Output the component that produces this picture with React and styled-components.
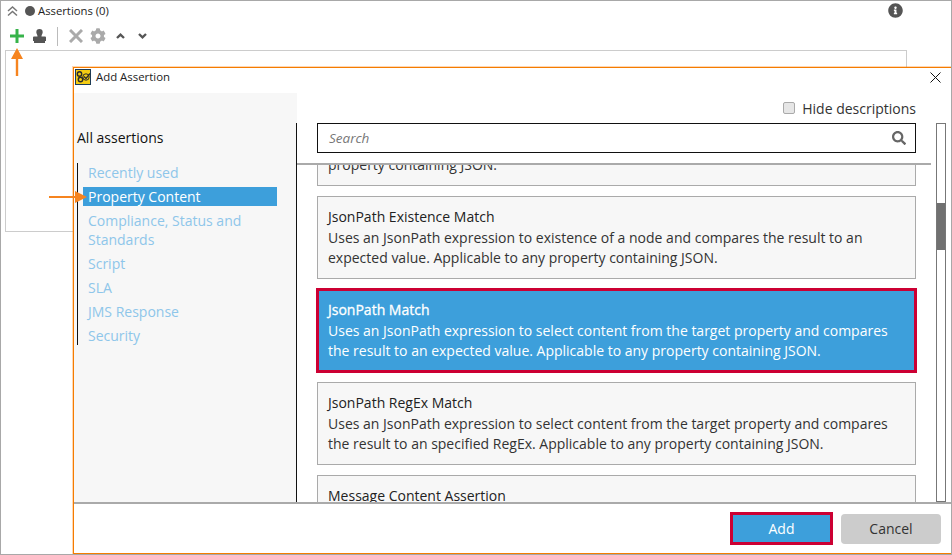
import React from 'react';
import styled, { createGlobalStyle } from 'styled-components';
import { FaInfoCircle, FaCog, FaSearch } from 'react-icons/fa';

const GlobalStyle = createGlobalStyle`
  html, body {
    margin: 0;
    padding: 0;
    background: #fff;
  }
  * {
    box-sizing: border-box;
  }
`;

const Page = styled.div`
  position: relative;
  width: 952px;
  height: 555px;
  overflow: hidden;
  background: #fff;
  border: 1px solid #a8a8a8;
  font-family: 'Open Sans', 'Noto Sans', sans-serif;
  font-size: 14px;
  color: #333;
`;

const Header = styled.div`
  display: flex;
  align-items: center;
  height: 19px;
  padding-left: 5px;
  font-size: 11.3px;
  color: #222;
`;

const Dot = styled.span`
  width: 10px;
  height: 10px;
  margin: 0 3px 0 6px;
  border-radius: 50%;
  background: #555;
`;

const InfoButton = styled.span`
  display: flex;
  margin-left: auto;
  margin-right: 48px;
  color: #555;
  font-size: 15px;
`;

const Toolbar = styled.div`
  display: flex;
  align-items: center;
  height: 30px;
  padding: 2px 0 0 9px;
`;

const ToolIcon = styled.span`
  display: flex;
  justify-content: center;
  width: ${p => p.$w}px;
  color: ${p => p.$color || '#aaa'};
`;

const ToolDivider = styled.span`
  width: 1px;
  height: 19px;
  margin: 0 11px 0 3px;
  background: #bbb;
`;

const AssertionBox = styled.div`
  width: 902px;
  height: 182px;
  margin-left: 4px;
  border: 1px solid #ccc;
`;

const Dialog = styled.div`
  position: absolute;
  left: 72px;
  top: 66px;
  width: 879px;
  height: 487px;
  display: flex;
  flex-direction: column;
  background: #fff;
  border: 1px solid #f57c00;
  box-shadow: 0 0 0 1px rgba(255, 122, 0, 0.3);
`;

const TitleBar = styled.div`
  display: flex;
  align-items: flex-start;
  flex: 0 0 25px;
  padding: 1px 0 0 1px;
  font-size: 11.4px;
  line-height: 16px;
  color: #222;
`;

const DialogTitle = styled.span`
  margin-left: 5px;
`;

const CloseButton = styled.span`
  display: flex;
  margin: 3px 10px 0 auto;
  color: #111;
`;

const DialogBody = styled.div`
  display: flex;
  flex: 1;
  min-height: 0;
`;

const Sidebar = styled.div`
  width: 223px;
  padding: 36px 0 0 3px;
  background: #f7f7f7;
`;

const SidebarTitle = styled.div`
  height: 34px;
  font-size: 14px;
  line-height: 17px;
  color: #111;
`;

const CategoryList = styled.ul`
  display: flex;
  flex-direction: column;
  gap: 5px;
  width: 200px;
  margin: 0;
  padding: 0 0 0 5px;
  list-style: none;
  border-left: 1px solid #111;
`;

const Category = styled.li`
  padding-left: 5px;
  line-height: 19px;
  font-size: 14px;
  color: ${p => p.$active ? '#fff' : '#8ec6ea'};
  background: ${p => p.$active ? '#3d9fdb' : 'transparent'};
`;

const Content = styled.div`
  flex: 1;
  display: flex;
  flex-direction: column;
  min-width: 0;
`;

const OptionsRow = styled.div`
  display: flex;
  align-items: center;
  justify-content: flex-end;
  flex: 0 0 30px;
  padding-right: 35px;
  font-size: 14px;
  color: #333;
`;

const CheckBox = styled.span`
  width: 12px;
  height: 12px;
  margin-right: 7px;
  border: 1px solid #aaa;
  border-radius: 2px;
  background: #e6e6e6;
`;

const Panel = styled.div`
  position: relative;
  flex: 1;
  display: flex;
  flex-direction: column;
  min-height: 0;
  margin-left: -1px;
  border-left: 1px solid #111;
`;

const Search = styled.div`
  display: flex;
  align-items: center;
  justify-content: space-between;
  flex: 0 0 30px;
  width: 599px;
  margin-left: 20px;
  padding: 0 9px 0 11px;
  border: 1px solid #111;
  font-size: 13.5px;
  font-style: italic;
  color: #777;
`;

const SearchIcon = styled.span`
  display: flex;
  color: #666;
  font-size: 14px;
  font-style: normal;
`;

const Scroller = styled.div`
  flex: 1;
  width: 634px;
  min-height: 0;
  margin-top: 10px;
  overflow: hidden;
  border-top: 2px solid #aaa;
`;

const CardList = styled.div`
  display: flex;
  flex-direction: column;
  gap: 10px;
  width: 599px;
  margin: -62px 0 0 20px;
`;

const Card = styled.div`
  position: relative;
  flex: 0 0 83px;
  padding: 10px 10px 0;
  background: ${p => p.$selected ? '#3d9fdb' : '#f7f7f7'};
  color: ${p => p.$selected ? '#fff' : '#333'};
  border: 1px solid #aaa;
  outline: ${p => p.$selected ? '3px solid #cc0033' : 'none'};
  outline-offset: -2px;
  line-height: 20.5px;
  font-size: 14px;
`;

const CardTitle = styled.div`
  color: ${p => p.$selected ? '#fff' : '#222'};
  -webkit-text-stroke: ${p => p.$selected ? '0.3px #fff' : '0'};
`;

const ScrollTrack = styled.div`
  position: absolute;
  left: 639px;
  top: 0;
  bottom: 0;
  width: 10px;
  border: 1px solid #777;
  background: #fff;
`;

const ScrollThumb = styled.div`
  height: 47px;
  margin-top: 79px;
  background: #707070;
`;

const Footer = styled.div`
  display: flex;
  align-items: center;
  justify-content: flex-end;
  flex: 0 0 51px;
  gap: 8px;
  padding-right: 10px;
  border-top: 2px solid #aaa;
`;

const Button = styled.button`
  width: ${p => p.$primary ? '103px' : '100px'};
  height: ${p => p.$primary ? '33px' : '30px'};
  font-family: inherit;
  font-size: 14px;
  color: ${p => p.$primary ? '#fff' : '#333'};
  background: ${p => p.$primary ? '#3d9fdb' : '#ccc'};
  border: ${p => p.$primary ? '3px solid #cc0033' : 'none'};
  border-radius: ${p => p.$primary ? '0' : '4px'};
`;

const ArrowUp = styled.svg`
  position: absolute;
  left: 10px;
  top: 47px;
`;

const ArrowRight = styled.svg`
  position: absolute;
  left: 48px;
  top: 190px;
`;

const cards = [
  { name: 'JsonPath Count', text: 'Uses an JsonPath expression to count the occurrences of an element. Applicable to any property containing JSON.' },
  { name: 'JsonPath Existence Match', text: 'Uses an JsonPath expression to existence of a node and compares the result to an expected value. Applicable to any property containing JSON.' },
  { name: 'JsonPath Match', text: 'Uses an JsonPath expression to select content from the target property and compares the result to an expected value. Applicable to any property containing JSON.', selected: true },
  { name: 'JsonPath RegEx Match', text: 'Uses an JsonPath expression to select content from the target property and compares the result to an specified RegEx. Applicable to any property containing JSON.' },
  { name: 'Message Content Assertion', text: 'Allows for complex content validation of XML messages.' },
];

const categories = ['Recently used', 'Property Content', 'Compliance, Status and Standards', 'Script', 'SLA', 'JMS Response', 'Security'];

const App = () => (
  <>
    <GlobalStyle />
    <Page>
      <Header>
        <svg width="13" height="12" viewBox="0 0 13 12" fill="none" stroke="#777" strokeWidth="1.5">
          <path d="M2 6l4.500-4L11 6M2 10.500l4.500-4 4.500 4" />
        </svg>
        <Dot />
        Assertions (0)
        <InfoButton><FaInfoCircle /></InfoButton>
      </Header>
      <Toolbar>
        <ToolIcon $w={14} $color="#37b34a">
          <svg width="14" height="14" viewBox="0 0 14 14"><path d="M5.500 0h3v5.500H14v3H8.500V14h-3V8.500H0v-3h5.500z" fill="currentColor" /></svg>
        </ToolIcon>
        <ToolIcon $w={30} $color="#555">
          <svg width="13" height="14" viewBox="0 0 13 14"><path d="M6.500 0a3.200 3.200 0 0 1 3.200 3.200c0 1.500-1.200 2.100-1.200 4.300H12a1 1 0 0 1 1 1V12h-1v2H1v-2H0V8.500a1 1 0 0 1 1-1h3.500C4.500 5.300 3.300 4.700 3.300 3.200A3.200 3.200 0 0 1 6.500 0z" fill="currentColor" /></svg>
        </ToolIcon>
        <ToolDivider />
        <ToolIcon $w={14}>
          <svg width="14" height="14" viewBox="0 0 14 14" fill="none" stroke="currentColor" strokeWidth="3"><path d="M1 1l12 12M13 1L1 13" /></svg>
        </ToolIcon>
        <ToolIcon $w={30}><FaCog size={16} /></ToolIcon>
        <ToolIcon $w={14} $color="#555">
          <svg width="9" height="6" viewBox="0 0 9 6" fill="none" stroke="currentColor" strokeWidth="2.400"><path d="M1 5l3.500-3.300L8 5" /></svg>
        </ToolIcon>
        <ToolIcon $w={31} $color="#555">
          <svg width="9" height="6" viewBox="0 0 9 6" fill="none" stroke="currentColor" strokeWidth="2.400"><path d="M1 1l3.500 3.300L8 1" /></svg>
        </ToolIcon>
      </Toolbar>
      <AssertionBox />
      <ArrowUp width="12" height="28" viewBox="0 0 12 28">
        <path d="M6 0l6 11H7.200v17H4.800V11H0z" fill="#f6841f" />
      </ArrowUp>
      <Dialog>
        <TitleBar>
          <svg width="16" height="16" viewBox="0 0 16 16">
            <rect width="16" height="16" fill="#1d3b55" />
            <rect x="1" y="1" width="14" height="14" fill="#f4cc12" />
            <circle cx="4.500" cy="5" r="2.200" fill="none" stroke="#2a2a2a" strokeWidth="1.400" />
            <circle cx="5.500" cy="10.500" r="2.200" fill="none" stroke="#2a2a2a" strokeWidth="1.400" />
            <circle cx="11" cy="8" r="3.200" fill="none" stroke="#2a2a2a" strokeWidth="1" />
            <path d="M9 7.500l2 2 4-5" fill="none" stroke="#2a2a2a" strokeWidth="1.300" />
          </svg>
          <DialogTitle>Add Assertion</DialogTitle>
          <CloseButton>
            <svg width="11" height="11" viewBox="0 0 11 11" stroke="currentColor" strokeWidth="1"><path d="M.5.500l10 10M10.500.500l-10 10" /></svg>
          </CloseButton>
        </TitleBar>
        <DialogBody>
          <Sidebar>
            <SidebarTitle>All assertions</SidebarTitle>
            <CategoryList>
              {categories.map(c => (
                <Category key={c} $active={c === 'Property Content'}>{c}</Category>
              ))}
            </CategoryList>
          </Sidebar>
          <Content>
            <OptionsRow><CheckBox />Hide descriptions</OptionsRow>
            <Panel>
              <Search>Search<SearchIcon><FaSearch /></SearchIcon></Search>
              <Scroller>
                <CardList>
                  {cards.map(c => (
                    <Card key={c.name} $selected={c.selected}>
                      <CardTitle $selected={c.selected}>{c.name}</CardTitle>
                      {c.text}
                    </Card>
                  ))}
                </CardList>
              </Scroller>
              <ScrollTrack><ScrollThumb /></ScrollTrack>
            </Panel>
          </Content>
        </DialogBody>
        <Footer>
          <Button $primary>Add</Button>
          <Button>Cancel</Button>
        </Footer>
      </Dialog>
      <ArrowRight width="38" height="12" viewBox="0 0 38 12">
        <path d="M38 6L26 12V7H0V5h26V0z" fill="#f6841f" />
      </ArrowRight>
    </Page>
  </>
);

export default App;
